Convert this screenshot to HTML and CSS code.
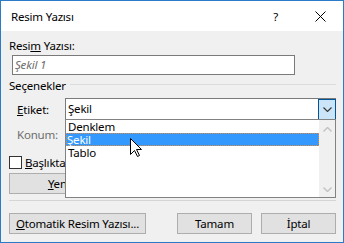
FILE: index.html
```html
<!DOCTYPE html>
<html>
<head>
<meta charset="utf-8">
<link rel="stylesheet" href="styles.css">
</head>
<body>
<div class="window">
  <div class="titlebar">
    <span class="title">Resim Yazısı</span>
    <span class="help">?</span>
    <svg class="close" width="11" height="11" viewBox="0 0 11 11"><path d="M0.5 0.5L10.5 10.5M10.5 0.5L0.5 10.5" stroke="#000" stroke-width="1" fill="none"/></svg>
  </div>
  <div class="body">
    <div class="label">Resi<u>m</u> Yazısı:</div>
    <div class="input">Şekil 1</div>
    <div class="group"><span>Seçenekler</span><span class="rule"></span></div>
    <div class="row">
      <span class="fl"><u>E</u>tiket:</span>
      <div class="combo">
        <span class="combo-text">Şekil</span>
        <span class="combo-btn"><svg width="9" height="5" viewBox="0 0 9 5"><path d="M0.5 0.5L4.5 4.5L8.5 0.5" stroke="#3a3a3a" stroke-width="1.2" fill="none"/></svg></span>
      </div>
    </div>
    <div class="row konum">
      <span class="fl disabled">Konum:</span>
      <div class="combo off"></div>
    </div>
    <div class="check"><span class="box"></span><span class="clip"><u>B</u>aşlıktan etiketi çıkar</span></div>
    <div class="btnrow">
      <button class="btn yeni"><u>Y</u>eni Etiket...</button>
    </div>
    <div class="sep"></div>
    <div class="actions">
      <button class="btn auto"><u>O</u>tomatik Resim Yazısı...</button>
      <span class="spacer"></span>
      <button class="btn small">Tamam</button>
      <button class="btn small">İptal</button>
    </div>
  </div>
  <div class="listbox">
    <div class="items">
      <div class="item">Denklem</div>
      <div class="item sel">Şekil</div>
      <div class="item">Tablo</div>
    </div>
    <div class="scroll">
      <svg width="9" height="5" viewBox="0 0 9 5"><path d="M0.5 4.5L4.5 0.5L8.5 4.5" stroke="#c2c2c2" stroke-width="1.4" fill="none"/></svg>
      <svg width="9" height="5" viewBox="0 0 9 5"><path d="M0.5 0.5L4.5 4.5L8.5 0.5" stroke="#c2c2c2" stroke-width="1.4" fill="none"/></svg>
    </div>
  </div>
  <svg class="cursor" width="13" height="20" viewBox="0 0 13 20"><path d="M0.5 0.5L0.5 16.5L4.5 12.5L7.5 18.5L9.5 17.5L6.5 11.5L11.5 11.5Z" fill="#fff" stroke="#000" stroke-width="1" stroke-linejoin="miter"/></svg>
</div>
</body>
</html>
```
FILE: styles.css
```css
* { box-sizing: border-box; }
body {
  margin: 0;
  font-family: "Noto Sans", "DejaVu Sans", sans-serif;
  font-size: 11.5px;
  letter-spacing: -0.2px;
  color: #000;
}
.window {
  width: 344px;
  height: 243px;
  border: 1px solid #2b7bc7;
  background: #f0f0f0;
  position: relative;
  overflow: hidden;
}
.titlebar {
  height: 30px;
  background: #fff;
  display: flex;
  align-items: center;
  padding-left: 10px;
  padding-right: 17px;
}
.title { flex: 1; line-height: 15px; }
.help { line-height: 15px; }
.close { margin-left: 37px; }
.body {
  padding: 7px 7px 0 8px;
}
.label { line-height: 15px; }
.input {
  margin: 2px 0 0 3px;
  width: 283px;
  height: 20px;
  background: #fff;
  border: 1px solid #7a7a7a;
  font-style: italic;
  color: #6d6d6d;
  padding-left: 2px;
  line-height: 18px;
}
.group {
  display: flex;
  align-items: center;
  margin-top: 3px;
  line-height: 15px;
}
.rule {
  flex: 1;
  height: 1px;
  background: #dcdcdc;
  margin-left: 4px;
  margin-top: -2px;
}
.row {
  display: flex;
  align-items: center;
  margin-top: 5px;
}
.row.konum { margin-top: 3px; }
.fl { width: 56px; padding-left: 8px; line-height: 15px; }
.disabled { color: #6d6d6d; }
.combo {
  flex: 1;
  height: 22px;
  display: flex;
  background: #fff;
  border: 1px solid #7a7a7a;
}
.combo.off { background: #f0f0f0; border-color: #ccc; }
.combo-text { flex: 1; padding-left: 2px; line-height: 20px; }
.combo-btn {
  width: 18px;
  height: 21px;
  margin: 0 -1px -1px 0;
  background: #cce4f7;
  border: 1px solid #005499;
  display: flex;
  align-items: center;
  justify-content: center;
}
.check {
  display: flex;
  align-items: center;
  margin-top: 10px;
  line-height: 15px;
}
.box {
  width: 13px;
  height: 13px;
  border: 1px solid #333;
  background: #fff;
  margin-right: 3px;
}
.clip {
  width: 40px;
  overflow: hidden;
  white-space: nowrap;
}
.btnrow {
  display: flex;
  width: 57px;
  overflow: hidden;
  margin-top: 3px;
}
.btn {
  height: 21px;
  background: #e1e1e1;
  border: 1px solid #adadad;
  font: inherit;
  letter-spacing: inherit;
  color: #000;
  padding: 0;
  line-height: 19px;
  white-space: nowrap;
}
.yeni { flex: none; width: 140px; }
.sep {
  height: 1px;
  background: #d5d5d5;
  margin-top: 6px;
}
.actions {
  display: flex;
  margin-top: 12px;
}
.auto { width: 137px; }
.spacer { flex: 1; }
.small { width: 75px; margin-left: 9px; }
.listbox {
  position: absolute;
  left: 64px;
  top: 118px;
  width: 271px;
  height: 79px;
  background: #fff;
  border: 1px solid #828282;
  display: flex;
}
.items { flex: 1; }
.item {
  height: 13px;
  line-height: 13px;
  padding-left: 1px;
  border: 1px solid transparent;
  border-width: 0 1px;
}
.item.sel {
  background: #3399ff;
  color: #fff;
  border: 1px dotted #e2893a;
  line-height: 11px;
  padding-left: 0;
}
.scroll {
  width: 16px;
  background: #f0f0f0;
  display: flex;
  flex-direction: column;
  align-items: center;
  justify-content: space-between;
  padding: 7px 0 5px;
}
.cursor {
  position: absolute;
  left: 129px;
  top: 137px;
}
```
